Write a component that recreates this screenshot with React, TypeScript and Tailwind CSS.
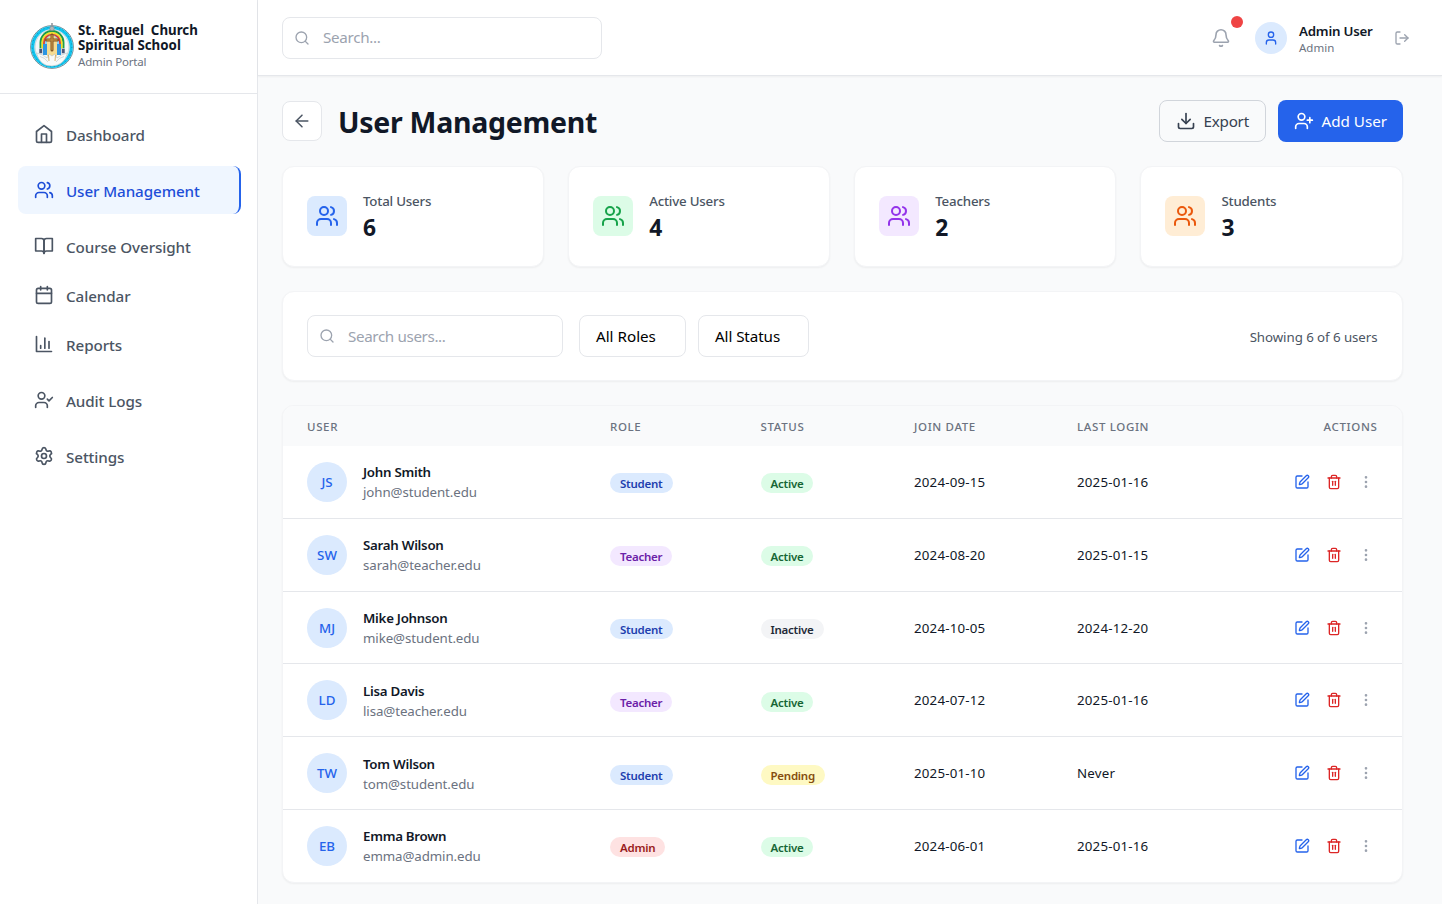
import React from "react";
import {
  ArrowLeft, Bell, BookOpen, Calendar, Download, LogOut, MoreVertical, Search, Settings,
  SquarePen, Trash2, User, UserCheck, UserPlus, Users, type LucideIcon,
} from "lucide-react";

type IconProps = { className?: string; strokeWidth?: number };

function HomeIcon({ className, strokeWidth = 2 }: IconProps) {
  return (
    <svg className={className} viewBox="0 0 24 24" fill="none" stroke="currentColor" strokeWidth={strokeWidth} strokeLinecap="round" strokeLinejoin="round">
      <path d="m3 9 9-7 9 7v11a2 2 0 0 1-2 2H5a2 2 0 0 1-2-2z" />
      <path d="M9 22V12h6v10" />
    </svg>
  );
}

function ChartIcon({ className, strokeWidth = 2 }: IconProps) {
  return (
    <svg className={className} viewBox="0 0 24 24" fill="none" stroke="currentColor" strokeWidth={strokeWidth} strokeLinecap="round" strokeLinejoin="round">
      <path d="M3 3v18h18" />
      <path d="M18 17V9" />
      <path d="M13 17V5" />
      <path d="M8 17v-3" />
    </svg>
  );
}

function OpenBookIcon({ className, strokeWidth = 2 }: IconProps) {
  return (
    <svg className={className} viewBox="0 0 24 24" fill="none" stroke="currentColor" strokeWidth={strokeWidth} strokeLinecap="round" strokeLinejoin="round">
      <path d="M2 3h7a3 3 0 0 1 3 3v15a3 3 0 0 0-3-3H2z" />
      <path d="M22 3h-7a3 3 0 0 0-3 3v15a3 3 0 0 1 3-3h7z" />
    </svg>
  );
}

function Emblem() {
  return (
    <svg className="h-12 w-11 shrink-0" viewBox="0 0 44 48">
      <circle cx="22" cy="25" r="21.4" fill="#e8f8fb" stroke="#44606c" strokeWidth="0.7" />
      <circle cx="22" cy="25" r="19.300" fill="none" stroke="#12c4ee" strokeWidth="3.200" />
      <circle cx="22" cy="25" r="19.800" fill="none" stroke="#1a7f9c" strokeWidth="0.8" strokeDasharray="1 3" />
      <circle cx="22" cy="25" r="17" fill="#f4f8f8" stroke="#9fb4ba" strokeWidth="0.5" />
      <path d="M10.500 27V20.500a11.500 11.500 0 0 1 23 0V27" fill="#8fd2f2" stroke="#1c9a48" strokeWidth="1.900" />
      <path d="M12.300 27V20.500a9.700 9.700 0 0 1 19.400 0V27" fill="none" stroke="#f8df22" strokeWidth="1.800" />
      <path d="M14 27V20.500a8 8 0 0 1 16 0V27" fill="none" stroke="#de3a30" strokeWidth="1.700" />
      <path d="M13 22h5v11h-5zM26 22h5v11h-5z" fill="#2e95e2" />
      <path d="M17 34V19q0-4 5-6 5 2 5 6v15z" fill="#f6dc92" />
      <path d="M9 26.500h3.500v5H9zM31.500 26.500H35v5h-3.500z" fill="#4c5878" stroke="#e8eef2" strokeWidth="0.6" />
      <path d="M22 13v15M16.500 18h11" stroke="#7d5222" strokeWidth="3" strokeLinecap="round" />
      <path d="M22 13.500v14M17 18h10" stroke="#bd8a41" strokeWidth="1.500" strokeLinecap="round" />
      <path d="M6.500 31q6 1 10.500 5l2-4 3 2 3-2 2 4q4.500-4 10.500-5-3.500 12.500-15.500 13T6.500 31z" fill="#f8faf9" stroke="#b9c1c2" strokeWidth="0.6" />
      <path d="M10 34.500q5 1 8 5.500M34 34.500q-5 1-8 5.500" fill="none" stroke="#c3c9ca" strokeWidth="0.7" />
      <path d="M18.500 33l.5 6M25.500 33l-.5 6" fill="none" stroke="#d5aa62" strokeWidth="0.900" />
      <path d="M22 1v6" stroke="#9299a0" strokeWidth="1.600" />
      <circle cx="22" cy="6.500" r="2.300" fill="#b3b7b8" stroke="#7b8288" strokeWidth="0.6" />
    </svg>
  );
}

type NavItem = { label: string; icon: LucideIcon | ((p: IconProps) => React.ReactElement); gap: string; active?: boolean };

const NAV: NavItem[] = [
  { label: "Dashboard", icon: HomeIcon, gap: "mb-2" },
  { label: "User Management", icon: Users, gap: "mb-2", active: true },
  { label: "Course Oversight", icon: OpenBookIcon, gap: "mb-[1px]" },
  { label: "Calendar", icon: Calendar, gap: "mb-[1px]" },
  { label: "Reports", icon: ChartIcon, gap: "mb-2" },
  { label: "Audit Logs", icon: UserCheck, gap: "mb-2" },
  { label: "Settings", icon: Settings, gap: "" },
];

const STATS = [
  { label: "Total Users", value: 6, tone: "bg-[#dbeafe] text-[#2563eb]" },
  { label: "Active Users", value: 4, tone: "bg-[#dcfce7] text-[#16a34a]" },
  { label: "Teachers", value: 2, tone: "bg-[#f3e8ff] text-[#9333ea]" },
  { label: "Students", value: 3, tone: "bg-[#ffedd5] text-[#ea580c]" },
];

const ROWS = [
  { initials: "JS", name: "John Smith", email: "john@student.edu", role: "Student", status: "Active", joined: "2024-09-15", login: "2025-01-16" },
  { initials: "SW", name: "Sarah Wilson", email: "sarah@teacher.edu", role: "Teacher", status: "Active", joined: "2024-08-20", login: "2025-01-15" },
  { initials: "MJ", name: "Mike Johnson", email: "mike@student.edu", role: "Student", status: "Inactive", joined: "2024-10-05", login: "2024-12-20" },
  { initials: "LD", name: "Lisa Davis", email: "lisa@teacher.edu", role: "Teacher", status: "Active", joined: "2024-07-12", login: "2025-01-16" },
  { initials: "TW", name: "Tom Wilson", email: "tom@student.edu", role: "Student", status: "Pending", joined: "2025-01-10", login: "Never" },
  { initials: "EB", name: "Emma Brown", email: "emma@admin.edu", role: "Admin", status: "Active", joined: "2024-06-01", login: "2025-01-16" },
];

const BADGE: Record<string, string> = {
  Student: "bg-[#dbeafe] text-[#1e40af]",
  Teacher: "bg-[#f3e8ff] text-[#6b21a8]",
  Admin: "bg-[#fee2e2] text-[#991b1b]",
  Active: "bg-[#dcfce7] text-[#166534]",
  Inactive: "bg-[#f3f4f6] text-[#1f2937]",
  Pending: "bg-[#fef9c3] text-[#854d0e]",
};

const COLS = "grid grid-cols-[303px_150.500px_153.500px_163px_1fr] px-6";
const CARD = "rounded-xl border border-[#f3f4f6] bg-white shadow-[0_1px_2px_rgba(0,0,0,0.05)]";

function Badge({ label }: { label: string }) {
  return (
    <span className={`mt-[3px] flex h-5 items-center rounded-full px-2.5 pt-[2px] text-[11.500px] leading-4 font-semibold tracking-[-0.022em] ${BADGE[label]}`}>{label}</span>
  );
}

function Sidebar() {
  return (
    <aside className="flex w-[258px] shrink-0 flex-col border-r border-[#e5e7eb] bg-white">
      <div className="flex h-[94px] items-start border-b border-[#e5e7eb] pt-[22px] pl-[30px]">
        <Emblem />
        <div className="ml-1 pt-[1px]">
          <div className="text-[13.300px] leading-[15px] font-bold whitespace-pre text-[#111827]">{"St. Raguel  Church\nSpiritual School"}</div>
          <div className="mt-[1px] text-[11.500px] leading-4 tracking-[-0.015em] text-[#6b7280]">Admin Portal</div>
        </div>
      </div>
      <nav className="flex flex-col pt-4 pr-4 pl-[18px]">
        {NAV.map(({ label, icon: Icon, gap, active }) => (
          <a key={label} className={`flex h-12 items-center rounded-lg px-4 text-[15.200px] font-medium tracking-[-0.006em] ${gap} ${active ? "border-r-2 border-[#2563eb] bg-[#eff6ff] text-[#1d4ed8]" : "text-[#4b5563]"}`}>
            <Icon className="mr-3 size-5" strokeWidth={2} />
            <span className="pt-[2px]">{label}</span>
          </a>
        ))}
      </nav>
    </aside>
  );
}

function TopBar() {
  return (
    <header className="flex h-[75.500px] shrink-0 items-center justify-between border-b border-[#e5e7eb] bg-white pr-8 pl-6 shadow-[0_1px_2px_rgba(0,0,0,0.05)]">
      <div className="mt-[1px] flex h-[42px] w-80 items-center rounded-lg border border-[#e5e7eb] pl-[11px] text-[#9ca3af]">
        <Search className="size-4" strokeWidth={2} />
        <span className="ml-[13px] text-[15.200px] tracking-[-0.02em]">Search...</span>
      </div>
      <div className="mt-[1px] flex items-center">
        <div className="relative text-[#9ca3af]">
          <Bell className="size-5" strokeWidth={1.900} />
          <span className="absolute -top-3 left-5 size-3 rounded-full bg-[#ef4444]" />
        </div>
        <div className="ml-6 flex size-8 items-center justify-center rounded-full bg-[#dbeafe] text-[#2563eb]">
          <User className="size-4" strokeWidth={2} />
        </div>
        <div className="ml-3 w-[75px] pt-[2px]">
          <div className="text-[13.300px] leading-5 font-semibold tracking-[-0.016em] whitespace-nowrap text-[#111827]">Admin User</div>
          <div className="-mt-px text-[11.500px] leading-4 text-[#6b7280]">Admin</div>
        </div>
        <LogOut className="ml-5 size-4 text-[#9ca3af]" strokeWidth={2} />
      </div>
    </header>
  );
}

export default function App() {
  return (
    <div className="flex h-[904px] w-[1442px] overflow-hidden bg-[#f9fafb] font-['Noto_Sans',sans-serif] text-[#111827]">
      <Sidebar />
      <div className="flex min-w-0 flex-1 flex-col">
        <TopBar />
        <main className="flex flex-1 flex-col pt-6 pr-[39.500px] pl-6">
          <div className="flex h-[42px] items-center justify-between">
            <div className="flex items-center">
              <button className="flex size-10 items-center justify-center rounded-lg border border-[#e5e7eb] bg-white text-[#4b5563]">
                <ArrowLeft className="size-5" strokeWidth={1.800} />
              </button>
              <h1 className="ml-4 pt-[3px] text-[28.500px] leading-9 font-bold tracking-[-0.01em]">User Management</h1>
            </div>
            <div className="flex gap-3">
              <button className="flex h-[42px] w-[107px] items-center rounded-lg border border-[#d1d5db] pl-4 text-[15.200px] tracking-[-0.015em] text-[#374151]">
                <Download className="mr-2 size-5" strokeWidth={2} />
                <span className="pt-[2px]">Export</span>
              </button>
              <button className="flex h-[42px] w-[125px] items-center rounded-lg bg-[#2563eb] pl-4 text-[15.200px] text-white">
                <UserPlus className="mr-2 size-5" strokeWidth={2} />
                <span className="pt-[2px] whitespace-nowrap">Add User</span>
              </button>
            </div>
          </div>

          <section className="mt-6 grid grid-cols-4 gap-6">
            {STATS.map((s) => (
              <div key={s.label} className={`flex h-[101.500px] items-center px-6 ${CARD}`}>
                <div className={`flex size-10 items-center justify-center rounded-lg ${s.tone}`}>
                  <Users className="size-6" strokeWidth={2} />
                </div>
                <div className="ml-4 pt-[2px]">
                  <div className="text-[13.300px] leading-5 font-medium tracking-[-0.015em] text-[#4b5563]">{s.label}</div>
                  <div className="pt-[1px] text-[22.800px] leading-8 font-bold">{s.value}</div>
                </div>
              </div>
            ))}
          </section>

          <section className={`mt-6 flex h-[90px] items-center px-6 ${CARD}`}>
            <div className="flex h-[42px] w-64 items-center rounded-lg border border-[#e5e7eb] pl-[11px] text-[#9ca3af]">
              <Search className="size-4" strokeWidth={2} />
              <span className="ml-[13px] text-[15.200px] tracking-[-0.024em]">Search users...</span>
            </div>
            <div className="ml-4 flex h-[42px] w-[107px] items-center rounded-lg border border-[#e5e7eb] pl-4 text-[15.200px] text-black">All Roles</div>
            <div className="ml-3 flex h-[42px] w-[111px] items-center rounded-lg border border-[#e5e7eb] pl-4 text-[15.200px] tracking-[-0.006em] text-black">All Status</div>
            <div className="ml-auto pt-[3px] text-[13.300px] tracking-[-0.005em] text-[#4b5563]">Showing 6 of 6 users</div>
          </section>

          <section className={`mt-6 overflow-hidden ${CARD}`}>
            <div className={`${COLS} h-10 items-center bg-[#f9fafb] pt-[1px] text-[11.500px] font-medium tracking-[0.056em] text-[#6b7280]`}>
              <span>USER</span>
              <span>ROLE</span>
              <span>STATUS</span>
              <span>JOIN DATE</span>
              <span className="flex justify-between"><span>LAST LOGIN</span><span>ACTIONS</span></span>
            </div>
            {ROWS.map((r) => (
              <div key={r.name} className={`${COLS} h-[72.830px] items-center border-b border-[#e5e7eb] text-[13.300px] last:h-[71.500px] last:border-b-0`}>
                <div className="flex items-center">
                  <div className="flex size-10 items-center justify-center rounded-full bg-[#dbeafe] pt-[2px] font-medium text-[#2563eb]">{r.initials}</div>
                  <div className="ml-4 pt-[1px] leading-5">
                    <div className="font-semibold tracking-[-0.02em]">{r.name}</div>
                    <div className="tracking-[-0.007em] text-[#6b7280]">{r.email}</div>
                  </div>
                </div>
                <div className="flex"><Badge label={r.role} /></div>
                <div className="flex"><Badge label={r.status} /></div>
                <div className="pt-[2px] tracking-[0.015em]">{r.joined}</div>
                <div className="flex items-center justify-between">
                  <span className="pt-[2px] tracking-[0.015em]">{r.login}</span>
                  <span className="flex gap-4 pr-[3.500px]">
                    <SquarePen className="size-4 text-[#2563eb]" />
                    <Trash2 className="size-4 text-[#dc2626]" />
                    <MoreVertical className="size-4 text-[#9ca3af]" />
                  </span>
                </div>
              </div>
            ))}
          </section>
        </main>
      </div>
    </div>
  );
}
